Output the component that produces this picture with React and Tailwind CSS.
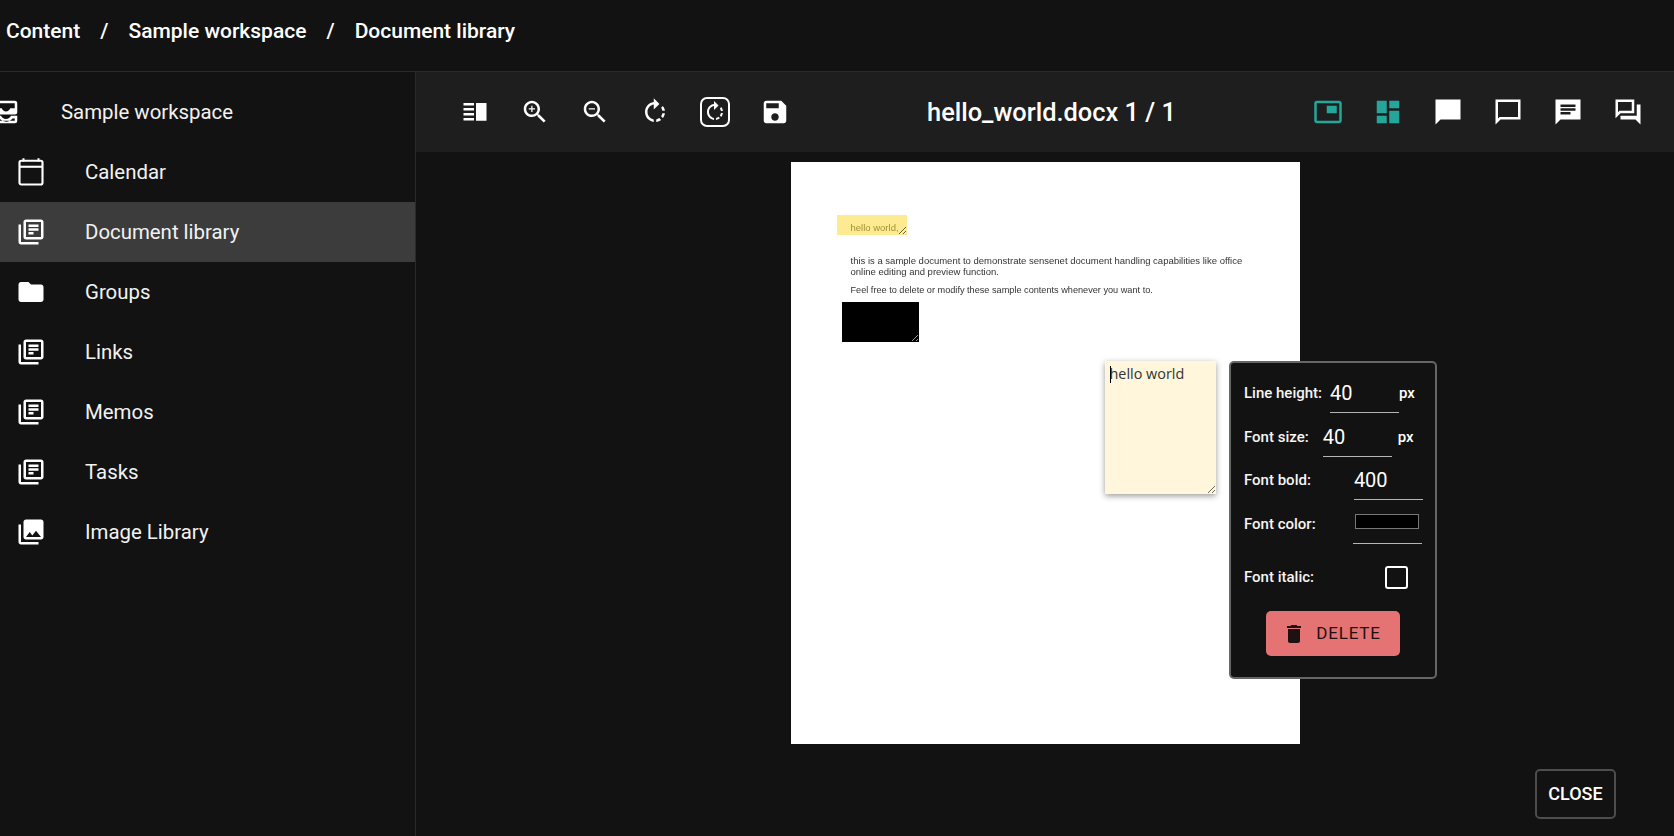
const Icon = ({ d, className = "w-[30px] h-[30px]", children }) => (
    <svg viewBox="0 0 24 24" fill="currentColor" fillRule="evenodd" className={`shrink-0 ${className}`}>
        {d && <path d={d} />}
        {children}
    </svg>
);

const LIBRARY =
    "M4 6H2v14c0 1.1.9 2 2 2h14v-2H4V6zm16-4H8c-1.1 0-2 .9-2 2v12c0 1.1.9 2 2 2h12c1.1 0 2-.9 2-2V4c0-1.1-.9-2-2-2zm0 14H8V4h12v12zM10 9h8v2h-8zm0 3h4v2h-4zm0-6h8v2h-8z";
const FOLDER =
    "M10 4H4c-1.1 0-1.99.9-1.99 2L2 18c0 1.1.9 2 2 2h16c1.1 0 2-.9 2-2V8c0-1.1-.9-2-2-2h-8l-2-2z";
const PHOTOS =
    "M22 16V4c0-1.1-.9-2-2-2H8c-1.1 0-2 .9-2 2v12c0 1.1.9 2 2 2h12c1.1 0 2-.9 2-2zm-11-4l2.03 2.71L16 11l4 5H8l3-4zM2 6v14c0 1.1.9 2 2 2h14v-2H4V6H2z";
const INBOX =
    "M5 3h14a2 2 0 012 2v7a2 2 0 01-2 2H5a2 2 0 01-2-2V5a2 2 0 012-2zM5 5v4h3.600c.5 1.500 1.900 2.500 3.400 2.500s2.900-1 3.400-2.500H19V5zM3 15h5c.7 1.500 2.200 2.500 4 2.500s3.300-1 4-2.500h5v4a2 2 0 01-2 2H5a2 2 0 01-2-2zM5 17.200V19h14v-1.800h-1.800c-1.100 1.500-3 2.500-5.200 2.500s-4.100-1-5.200-2.500z";
const ZOOM =
    "M15.5 14h-.79l-.28-.27C15.41 12.59 16 11.11 16 9.5 16 5.91 13.09 3 9.5 3S3 5.91 3 9.5 5.91 16 9.5 16c1.61 0 3.09-.59 4.23-1.57l.27.28v.79l5 4.99L20.49 19l-4.99-5zm-6 0C7.01 14 5 11.99 5 9.5S7.01 5 9.5 5 14 7.01 14 9.5 11.99 14 9.5 14z";
const ROTATE =
    "M15.55 5.55L11 1v3.07C7.06 4.56 4 7.92 4 12s3.05 7.44 7 7.93v-2.02c-2.84-.48-5-2.94-5-5.91s2.16-5.43 5-5.91V10l4.55-4.45zM19.93 11c-.17-1.39-.72-2.73-1.62-3.89l-1.42 1.42c.54.75.88 1.6 1.02 2.47h2.02zM13 17.9v2.02c1.39-.17 2.74-.71 3.9-1.61l-1.44-1.44c-.75.54-1.59.89-2.46 1.03zm3.89-2.42l1.42 1.41c.9-1.16 1.45-2.5 1.62-3.89h-2.02c-.14.87-.48 1.72-1.02 2.48z";

const CalendarIcon = () => (
    <svg viewBox="0 0 24 24" fill="none" stroke="currentColor" className="w-[30px] h-[30px] shrink-0">
        <rect x="2.8" y="3" width="18.4" height="19" rx="1.4" strokeWidth="1.7" />
        <path d="M3 7.8h18" strokeWidth="1.7" />
        <path d="M6 1v2.500M18 1v2.500" strokeWidth="1.600" />
    </svg>
);

const navItems = [
    { label: "Calendar", icon: <CalendarIcon /> },
    { label: "Document library", icon: <Icon d={LIBRARY} />, active: true },
    { label: "Groups", icon: <Icon d={FOLDER} /> },
    { label: "Links", icon: <Icon d={LIBRARY} /> },
    { label: "Memos", icon: <Icon d={LIBRARY} /> },
    { label: "Tasks", icon: <Icon d={LIBRARY} /> },
    { label: "Image Library", icon: <Icon d={PHOTOS} /> },
];

const Tool = ({ children, className = "text-white" }) => (
    <button className={`w-[60px] h-[60px] flex items-center justify-center ${className}`}>
        {children}
    </button>
);

const Row = ({ label, className = "", children }) => (
    <div className={`flex items-center ${className}`}>
        <span className="text-[15px] font-medium text-[#f5f5f5]">{label}</span>
        {children}
    </div>
);

const NumberInput = ({ value, className }) => (
    <input
        readOnly
        value={value}
        className={`w-[69px] h-[40px] bg-transparent border-b border-[#b5b5b5] text-white text-[20px] outline-none ${className}`}
    />
);

const App = () => {
    return (
        <div className="w-full h-screen flex flex-col overflow-hidden bg-[#121212] text-white font-['Roboto',sans-serif]">
            <header className="h-[72px] shrink-0 flex items-center gap-[20px] pl-[6px] pb-[8px] border-b border-[#2a2a2a] text-[21px] font-medium">
                <span>Content</span>
                <span>/</span>
                <span>Sample workspace</span>
                <span>/</span>
                <span>Document library</span>
            </header>
            <div className="flex flex-1 min-h-0">
                <aside className="w-[416px] shrink-0 border-r border-[#2a2a2a] overflow-hidden">
                    <div className="h-[80px] flex items-center pl-[61px] relative text-[20.400px] text-[#f2f2f2]">
                        <span className="absolute left-[-9px] top-[25px] text-white">
                            <Icon d={INBOX} />
                        </span>
                        Sample workspace
                    </div>
                    <nav className="-mt-[10px]">
                        {navItems.map((item) => (
                            <div
                                key={item.label}
                                className={`h-[60px] flex items-center pl-[16px] gap-[39px] text-[20.400px] text-[#f2f2f2] ${item.active ? "bg-[#3c3c3c]" : ""}`}
                            >
                                <span className="text-white">{item.icon}</span>
                                {item.label}
                            </div>
                        ))}
                    </nav>
                </aside>
                <main className="flex-1 min-w-0 flex flex-col relative">
                    <div className="h-[80px] shrink-0 bg-[#1e1e1e] flex items-center justify-between pl-[29px] pr-[16px]">
                        <div className="flex">
                            <Tool>
                                <Icon>
                                    <path d="M2.800 4.800h8.400v2H2.800zM2.800 8.800h8.400v2H2.800zM2.800 12.800h8.400v2H2.800zM2.800 16.800h8.400v2H2.800zM12.800 4.800h8.400v14.200h-8.400z" />
                                </Icon>
                            </Tool>
                            <Tool>
                                <Icon>
                                    <path d={ZOOM} />
                                    <path d="M12 10h-2v2H9v-2H7V9h2V7h1v2h2v1z" />
                                </Icon>
                            </Tool>
                            <Tool>
                                <Icon>
                                    <path d={ZOOM} />
                                    <path d="M7 9h5v1H7z" />
                                </Icon>
                            </Tool>
                            <Tool>
                                <Icon d={ROTATE} />
                            </Tool>
                            <Tool>
                                <span className="w-[30px] h-[30px] border-2 border-white rounded-[7px] flex items-center justify-center">
                                    <Icon d={ROTATE} className="w-[24px] h-[24px]" />
                                </span>
                            </Tool>
                            <Tool>
                                <Icon d="M17 3H5c-1.110 0-2 .9-2 2v14c0 1.100.89 2 2 2h14c1.100 0 2-.9 2-2V7l-4-4zm-5 16c-1.660 0-3-1.340-3-3s1.340-3 3-3 3 1.340 3 3-1.340 3-3 3zm3-10H5V5h10v4z" />
                            </Tool>
                        </div>
                        <div className="text-[25.400px] font-medium text-white">hello_world.docx 1 / 1</div>
                        <div className="flex">
                            <Tool className="text-[#26a69a]">
                                <Icon d="M19 7h-8v6h8V7zm2-4H3c-1.100 0-2 .9-2 2v14c0 1.100.9 1.980 2 1.980h18c1.100 0 2-.88 2-1.980V5c0-1.100-.9-2-2-2zm0 16.010H3V4.980h18v14.030z" />
                            </Tool>
                            <Tool className="text-[#26a69a]">
                                <Icon d="M3 13h8V3H3v10zm0 8h8v-6H3v6zm10 0h8V11h-8v10zm0-18v6h8V3h-8z" />
                            </Tool>
                            <Tool>
                                <Icon d="M2 2h20v16H6l-4 4z" />
                            </Tool>
                            <Tool>
                                <Icon d="M2 2h20v16H6l-4 4zM4 4v13.200L5.200 16H20V4z" />
                            </Tool>
                            <Tool>
                                <Icon d="M2 2h20v16H6l-4 4zM6 6v2h12V6zM6 9v2h12V9zM6 12v2h8v-2z" />
                            </Tool>
                            <Tool>
                                <Icon d="M2 2h15v11H6l-4 4zM4 4v8.200L5.200 11H15V4zM19 6h3v16l-4-4H6v-3h13z" />
                            </Tool>
                        </div>
                    </div>
                    <div className="flex-1 relative flex flex-col items-center pt-[10px]">
                        <div className="w-[509px] h-[582px] bg-white relative font-['Liberation_Sans',sans-serif] text-[#333]">
                            <div className="absolute left-[60px] top-[94px] w-[420px] text-[9.500px] leading-[10.500px] blur-[0.4px]">
                                <p>
                                    this is a sample document to demonstrate sensenet document handling capabilities like office
                                    <br />
                                    online editing and preview function.
                                </p>
                                <p className="mt-[8px] text-[9.170px]">Feel free to delete or modify these sample contents whenever you want to.</p>
                            </div>
                            <div className="absolute left-[60px] top-[59px] text-[9.500px] text-[#333] blur-[0.4px]">hello world,</div>
                            <textarea
                                readOnly
                                className="absolute left-[46px] top-[53px] w-[70px] h-[20px] block bg-[#fdd835]/55 resize outline-none [color-scheme:dark]"
                            />
                            <textarea
                                readOnly
                                className="absolute left-[51px] top-[140px] w-[77px] h-[40px] block bg-black resize outline-none [color-scheme:dark]"
                            />
                            <textarea
                                readOnly
                                defaultValue="hello world"
                                className="absolute left-[314px] top-[199px] w-[111px] h-[133px] block bg-[#fff6db] shadow-[0_2px_6px_rgba(0,0,0,0.4)] resize outline-none px-[5px] py-[4px] text-[14.400px] leading-[17px] text-[#333] font-['Open_Sans',sans-serif]"
                            />
                            <div className="absolute left-[319px] top-[204px] w-px h-[17px] bg-black" />
                        </div>
                        <div className="absolute left-[813px] top-[209px] w-[208px] h-[318px] bg-[#121212] border-2 border-[#666] rounded-[5px] pl-[13px]">
                            <Row label="Line height:" className="h-[44px] mt-[8px]">
                                <NumberInput value="40" className="ml-[8px]" />
                                <span className="text-[15px] font-medium">px</span>
                            </Row>
                            <Row label="Font size:" className="h-[44px]">
                                <NumberInput value="40" className="ml-[14px]" />
                                <span className="text-[15px] font-medium ml-[6px]">px</span>
                            </Row>
                            <Row label="Font bold:" className="h-[44px] -mt-px">
                                <NumberInput value="400" className="ml-[43px]" />
                            </Row>
                            <Row label="Font color:" className="h-[44px]">
                                <div className="ml-[37px] w-[69px] h-[40px] border-b border-[#b5b5b5] pt-[10px] pl-[2px]">
                                    <div className="w-[64px] h-[15px] bg-black border border-[#777]" />
                                </div>
                            </Row>
                            <Row label="Font italic:" className="h-[44px] mt-[9px]">
                                <div className="ml-[71px] w-[23px] h-[23px] border-2 border-white rounded-[3px]" />
                            </Row>
                            <div className="mt-[12px] pl-[22px]">
                                <button className="w-[134px] h-[45px] rounded-[5px] bg-[#e57373] text-[#1d1111] flex items-center justify-center gap-[10px] pr-[3px] text-[17px] font-normal tracking-[0.800px]">
                                    <Icon
                                        className="w-[24px] h-[24px]"
                                        d="M6 19c0 1.100.9 2 2 2h8c1.100 0 2-.9 2-2V7H6v12zM19 4h-3.500l-1-1h-5l-1 1H5v2h14V4z"
                                    />
                                    DELETE
                                </button>
                            </div>
                        </div>
                        <button className="absolute right-[58px] top-[617px] w-[81px] h-[50px] pb-[1px] border-2 border-[#4d4d4d] rounded-[5px] text-[18px] font-medium text-white">
                            CLOSE
                        </button>
                    </div>
                </main>
            </div>
        </div>
    );
};

export default App;
